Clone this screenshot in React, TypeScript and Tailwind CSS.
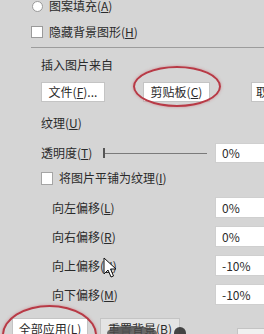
import React from "react";

const U = ({ c }: { c: string }) => <span className="underline underline-offset-[1px]">{c}</span>;

function Row({ label, k, value, first }: { label: string; k: string; value: string; first?: boolean }) {
  return (
    <div className={`flex h-[21px] items-center ${first ? "mt-[11px]" : "mt-[8px]"}`}>
      <span className="w-[184px] shrink-0 whitespace-nowrap pl-[21px] leading-[16px]">
        {label}(<U c={k} />)
      </span>
      <div className="h-[21px] w-[60px] shrink-0 border border-[#cfcfcf] bg-white pl-[6px] leading-[19px]">{value}</div>
    </div>
  );
}

export default function App() {
  return (
    <div
      className="relative h-[334px] w-[264px] overflow-hidden bg-[#d5d5d5] text-[12px] text-[#2a2a2a]"
      style={{ fontFamily: '"Noto Sans CJK SC", "Noto Sans", sans-serif' }}
    >
      <div className="flex flex-col pl-[31px]">
        <div className="-mt-[4px] flex h-[20px] items-center gap-[6px] whitespace-nowrap">
          <div className="ml-[1px] h-[11px] w-[11px] shrink-0 rounded-full border border-[#9a9a9a] bg-white" />
          <span className="leading-[16px]">
            图案填充(<U c="A" />)
          </span>
        </div>
        <div className="mt-[6px] flex h-[20px] items-center gap-[6px] whitespace-nowrap">
          <div className="h-[12px] w-[12px] shrink-0 border border-[#9a9a9a] bg-white" />
          <span className="leading-[16px]">
            隐藏背景图形(<U c="H" />)
          </span>
        </div>
        <div className="mt-[5px] h-px bg-[#9c9c9c]" />
        <div className="mt-[9px] pl-[10px] leading-[16px]">插入图片来自</div>
        <div className="mt-[9px] flex h-[20px] whitespace-nowrap pl-[10px]">
          <div className="flex h-[20px] w-[64px] shrink-0 items-center justify-center border border-[#c4c4c4] bg-white">
            文件(<U c="F" />)...
          </div>
          <div className="ml-[38px] flex h-[20px] w-[67px] shrink-0 items-center justify-center border border-[#c4c4c4] bg-white">
            剪贴板(<U c="C" />)
          </div>
          <div className="ml-[41px] flex h-[20px] w-[40px] shrink-0 items-center border border-[#c4c4c4] bg-white pl-[4px]">
            取
          </div>
        </div>
        <div className="mt-[13px] pl-[10px] leading-[16px]">
          纹理(<U c="U" />)
        </div>
        <div className="mt-[12px] flex h-[20px] items-center whitespace-nowrap pl-[10px]">
          <span className="w-[62px] shrink-0 leading-[16px]">
            透明度(<U c="T" />)
          </span>
          <div className="h-[10px] w-[2px] shrink-0 bg-[#555]" />
          <div className="h-px w-[102px] shrink-0 bg-[#7a7a7a]" />
          <div className="ml-[8px] h-[20px] w-[60px] shrink-0 border border-[#cfcfcf] bg-white pl-[6px] leading-[18px]">0%</div>
        </div>
        <div className="mt-[7px] flex h-[16px] items-center gap-[6px] whitespace-nowrap pl-[10px]">
          <div className="h-[13px] w-[12px] shrink-0 border border-[#a5a5a5] bg-white" />
          <span className="leading-[16px]">
            将图片平铺为纹理(<U c="I" />)
          </span>
        </div>
        <Row first label="向左偏移" k="L" value="0%" />
        <Row label="向右偏移" k="R" value="0%" />
        <Row label="向上偏移" k="N" value="-10%" />
        <Row label="向下偏移" k="M" value="-10%" />
      </div>
      <div className="mt-[13px] flex h-[24px] whitespace-nowrap">
        <div className="ml-[12px] flex h-[24px] w-[76px] shrink-0 items-start justify-center border border-[#c4c4c4] bg-white pt-[1px]">
          全部应用(<U c="L" />)
        </div>
        <div className="ml-[12px] flex h-[24px] w-[80px] shrink-0 items-start justify-center border border-[#c4c4c4] bg-[#e4e4e4] pt-[1px]">
          重置背景(<U c="B" />)
        </div>
        <div className="ml-[57px] mt-[10px] h-[14px] w-[30px] shrink-0 border border-[#c4c4c4] bg-[#f0f0f0]" />
      </div>

      {/* red annotation ellipses */}
      <div className="absolute left-[133px] top-[66px] h-[41px] w-[88px] rounded-[50%] border-[2px] border-[#b83a46] shadow-[0_0_3px_rgba(200,80,90,0.5)]" />
      <div className="absolute left-[2px] top-[305px] h-[60px] w-[95px] rounded-[50%] border-[2px] border-[#b83a46] shadow-[0_0_3px_rgba(200,80,90,0.5)]" />

      {/* smudge over reset button */}
      <svg className="absolute left-[100px] top-[318px]" width="90" height="16" viewBox="0 0 90 16">
        <ellipse cx="32" cy="15" rx="25" ry="7" fill="#4a4a4a" opacity="0.8" />
        <ellipse cx="22" cy="12" rx="10" ry="4" fill="#555" opacity="0.55" />
        <ellipse cx="80" cy="15" rx="6" ry="6" fill="#333" opacity="0.9" />
      </svg>

      {/* mouse cursor */}
      <svg className="absolute left-[103px] top-[257px]" width="14" height="22" viewBox="0 0 14 22">
        <path d="M1 1 L1 17 L5 13 L8 20 L10.5 19 L7.5 12 L13 12 Z" fill="white" stroke="#111" strokeWidth="1" strokeLinejoin="round" />
      </svg>
    </div>
  );
}
